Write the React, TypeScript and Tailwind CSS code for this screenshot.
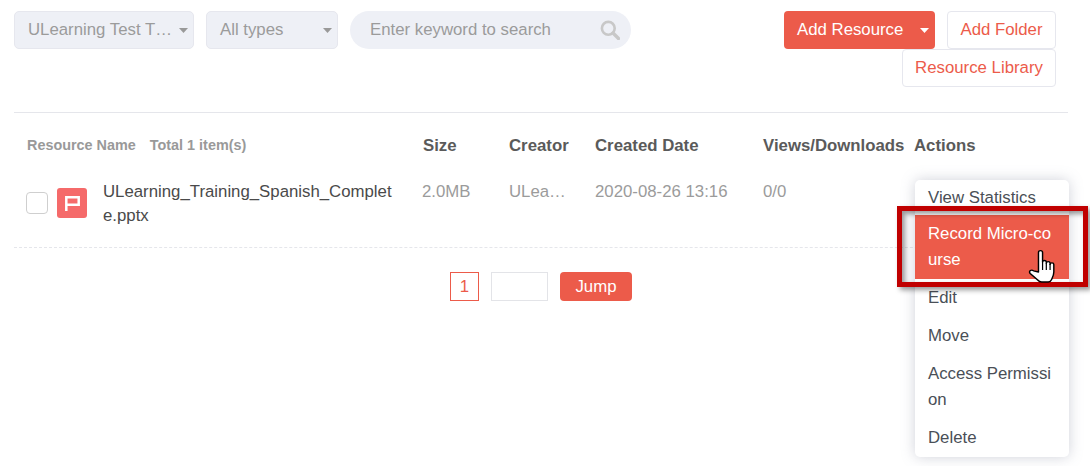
import React from "react";

function Caret({ className }: { className: string }) {
  return (
    <svg width="9" height="5" viewBox="0 0 9 5" className={className}>
      <path d="M0 0h9L4.5 5z" fill="currentColor" />
    </svg>
  );
}

function Select({ label, w }: { label: string; w: string }) {
  return (
    <div className={`${w} h-[38px] flex items-center justify-between pl-[13px] pr-[5px] rounded-[5px] bg-[#eef0f6] border border-[#e6e7ee] text-[#9b9b9b] text-[16.8px]`}>
      <span className="whitespace-nowrap">{label}</span>
      <Caret className="text-[#999999]" />
    </div>
  );
}

const menuCls = "pl-[13px] pr-[11px] text-[16.8px] leading-[26px] py-[6px] break-all text-[#4a4f57]";

export default function App() {
  return (
    <div className="relative w-[1090px] h-[466px] overflow-hidden bg-white font-['Liberation_Sans',Arial,sans-serif]">
      <div className="pl-[14px] pr-[22px] pt-[11px]">
        <div className="flex justify-between h-[76px] pr-[12px]">
          <div className="flex gap-[12px] items-start">
            <Select label="ULearning Test T…" w="w-[180px]" />
            <Select label="All types" w="w-[132px]" />
            <div className="w-[281px] h-[38px] rounded-full bg-[#eef0f6] flex items-center justify-between pl-[20px] pr-[11px] text-[16.8px] text-[#9b9b9b]">
              <span>Enter keyword to search</span>
              <svg width="20" height="20" viewBox="0 0 20 20" fill="none" stroke="#c8c8c8" strokeWidth="2.6">
                <circle cx="8.3" cy="8.3" r="6.4" />
                <path d="M13 13l5.5 5.5" strokeWidth="3.4" strokeLinecap="round" />
              </svg>
            </div>
          </div>
          <div className="flex flex-col items-end">
            <div className="flex gap-[12px]">
              <div className="w-[151px] h-[38px] bg-[#ec5b4a] rounded-[4px] text-white text-[16.8px] flex items-center pl-[13px] pr-[6px] justify-between">
                <span>Add Resource</span>
                <Caret className="text-white" />
              </div>
              <div className="w-[109px] h-[38px] bg-white border border-[#e6e7ee] rounded-[4px] text-[#ec5b4a] text-[16.8px] flex items-center justify-center">
                Add Folder
              </div>
            </div>
            <div className="w-[154px] h-[38px] bg-white border border-[#e6e7ee] rounded-[4px] text-[#ec5b4a] text-[16.8px] flex items-center justify-center">
              Resource Library
            </div>
          </div>
        </div>

        <div className="mt-[25px] h-px bg-[#e5e6eb]" />

        <div className="grid grid-cols-[397px_86px_86px_168px_151px_1fr] items-center h-[65px] pl-[12px] text-[16.8px] font-bold text-[#5a5a5a]">
          <div className="text-[14.4px] text-[#999999] flex gap-[14px] pl-[1px]">
            <span>Resource Name</span>
            <span>Total 1 item(s)</span>
          </div>
          <div>Size</div>
          <div>Creator</div>
          <div>Created Date</div>
          <div className="whitespace-nowrap">Views/Downloads</div>
          <div>Actions</div>
        </div>

        <div className="grid grid-cols-[397px_86px_86px_168px_151px_1fr] h-[70px] pl-[12px] border-b border-dashed border-[#e5e6eb] text-[16.8px] leading-[24px] text-[#9b9b9b]">
          <div className="flex items-start">
            <div className="w-[22px] h-[22px] mt-[14px] rounded-[4px] border border-[#cfcfcf] bg-white shrink-0" />
            <div className="w-[30px] h-[30px] mt-[10px] ml-[9px] rounded-[3px] bg-[#f56a6a] flex items-center justify-center shrink-0">
              <svg width="15" height="15" viewBox="0 0 15 15" fill="none" stroke="#ffffff" strokeWidth="2.5">
                <path d="M1.3 15V1.3h12.4v7.5H1.3" />
              </svg>
            </div>
            <div className="ml-[16px] w-[292px] mt-[2px] break-all text-[#4a4a4a]">ULearning_Training_Spanish_Complete.pptx</div>
          </div>
          <div className="-ml-[1px] mt-[2px]">2.0MB</div>
          <div className="mt-[2px]">ULea…</div>
          <div className="mt-[2px] whitespace-nowrap">2020-08-26 13:16</div>
          <div className="mt-[2px]">0/0</div>
          <div />
        </div>

        <div className="flex justify-center items-center gap-[12px] mt-[24px] -ml-[18px] text-[16.8px] w-[1090px]">
          <div className="w-[29px] h-[29px] border border-[#ec5b4a] text-[#ec5b4a] flex items-center justify-center">1</div>
          <div className="w-[57px] h-[29px] border border-[#e3e4e8] bg-white" />
          <div className="w-[72px] h-[29px] rounded-[4px] bg-[#ec5b4a] text-white flex items-center justify-center">Jump</div>
        </div>
      </div>

      {/* open actions menu */}
      <div className="absolute left-[915px] top-[180px] w-[154px] h-[277px] rounded-[5px] bg-white overflow-hidden shadow-[0_0_14px_rgba(120,125,150,0.35)]">
        <div className={`${menuCls} !pt-[5px] !pb-[4px]`}>View Statistics</div>
        <div className={`${menuCls} !text-white bg-[#ec5b4a]`}>Record Micro-course</div>
        <div className={menuCls}>Edit</div>
        <div className={menuCls}>Move</div>
        <div className={menuCls}>Access Permission</div>
        <div className={menuCls}>Delete</div>
      </div>

      {/* annotation rectangle */}
      <div className="absolute left-[897px] top-[206px] w-[191px] h-[81px] border-[5px] border-[#c00000] shadow-[3px_3px_5px_rgba(0,0,0,0.4),inset_3px_3px_5px_rgba(0,0,0,0.4)]" />

      {/* hand cursor */}
      <svg className="absolute left-[1028px] top-[249px]" width="32" height="34" viewBox="0 0 29 34" preserveAspectRatio="none">
        <path
          d="M9.5 23V3.5C9.5 1 13.2 1 13.2 3.5V13c0-2 3.4-2 3.4 0v1.2c0-2 3.4-2 3.4 0v1.2c0-2 3.4-2 3.4 0V23c0 3-1 5-2 7.5-.6 1.6-1.2 2.5-3 2.5h-6c-1.8 0-2.6-.7-3.6-2L2 24.5c-1.7-2.3 1-4.5 3-2.7z"
          fill="#ffffff"
          stroke="#000000"
          strokeWidth="1.3"
          strokeLinejoin="round"
        />
        <path d="M13.2 13v8M16.6 14v7M20 15v6" stroke="#000000" strokeWidth="1.1" fill="none" />
      </svg>
    </div>
  );
}
